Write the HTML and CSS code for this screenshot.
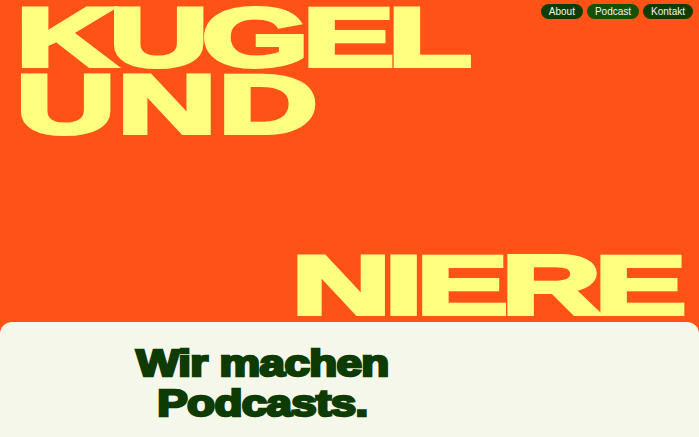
FILE: index.html
```html
<!DOCTYPE html>
<html lang="de">
<head>
<meta charset="utf-8">
<title>Kugel und Niere</title>
<link rel="stylesheet" href="styles.css">
</head>
<body>
<nav class="nav">
  <a class="pill" href="#">About</a>
  <a class="pill pill-active" href="#">Podcast</a>
  <a class="pill" href="#">Kontakt</a>
</nav>
<header class="hero">
  <h1 class="title">
    <span class="line line-1"><span class="word">KUGEL</span></span>
    <span class="line line-2"><span class="word word-wide">UND</span></span>
    <span class="line line-3"><span class="word word-right">NIERE</span></span>
  </h1>
</header>
<main class="panel">
  <div class="intro">
    <h2 class="claim"><span class="claim-text">Wir machen<br>Podcasts.</span></h2>
  </div>
  <p class="next">Kugel und Niere Podcast</p>
</main>
</body>
</html>
```
FILE: styles.css
```css
html, body {
  margin: 0;
  padding: 0;
}
body {
  background: #ff5216;
  height: 437px;
  overflow: hidden;
  font-family: "Liberation Sans", Arial, sans-serif;
}
.nav {
  position: absolute;
  top: 4px;
  right: 6px;
  display: flex;
  gap: 4px;
}
.pill {
  display: block;
  height: 15px;
  line-height: 15px;
  padding: 0 8px;
  border-radius: 8px;
  background: #0d3d04;
  color: #f3f5e6;
  font-size: 10px;
  text-decoration: none;
}
.pill-active {
  background: #135008;
}
.hero {
  padding: 3.5px 19px 3.6px 16px;
}
.title {
  margin: 0;
  font-size: 84px;
  line-height: 67px;
  font-weight: 700;
  color: #ffff80;
  letter-spacing: -4px;
  -webkit-text-stroke: 4px #ffff80;
}
.line {
  display: block;
  height: 67px;
}
.line-3 {
  margin-top: 114px;
  text-align: right;
}
.word {
  display: inline-block;
  transform: scaleX(1.64);
  transform-origin: left center;
}
.word-wide {
  letter-spacing: 1px;
}
.word-right {
  transform-origin: right center;
}
.panel {
  background: #f5f7eb;
  border-radius: 12px 12px 0 0;
  padding: 21.5px 0 0;
  min-height: 200px;
}
.intro {
  display: grid;
  grid-template-columns: 3fr 1fr;
}
.claim {
  margin: 0;
  text-align: center;
  font-size: 36px;
  line-height: 40px;
  font-weight: 700;
  color: #0d3b02;
  letter-spacing: -0.5px;
}
.claim-text {
  display: inline-block;
  transform: scaleX(1.27);
  -webkit-text-stroke: 2.5px #0d3b02;
}
.next {
  margin: 19px 0 0 28px;
  font-size: 60px;
  font-weight: 700;
  color: #ff5216;
  line-height: 60px;
}
```
